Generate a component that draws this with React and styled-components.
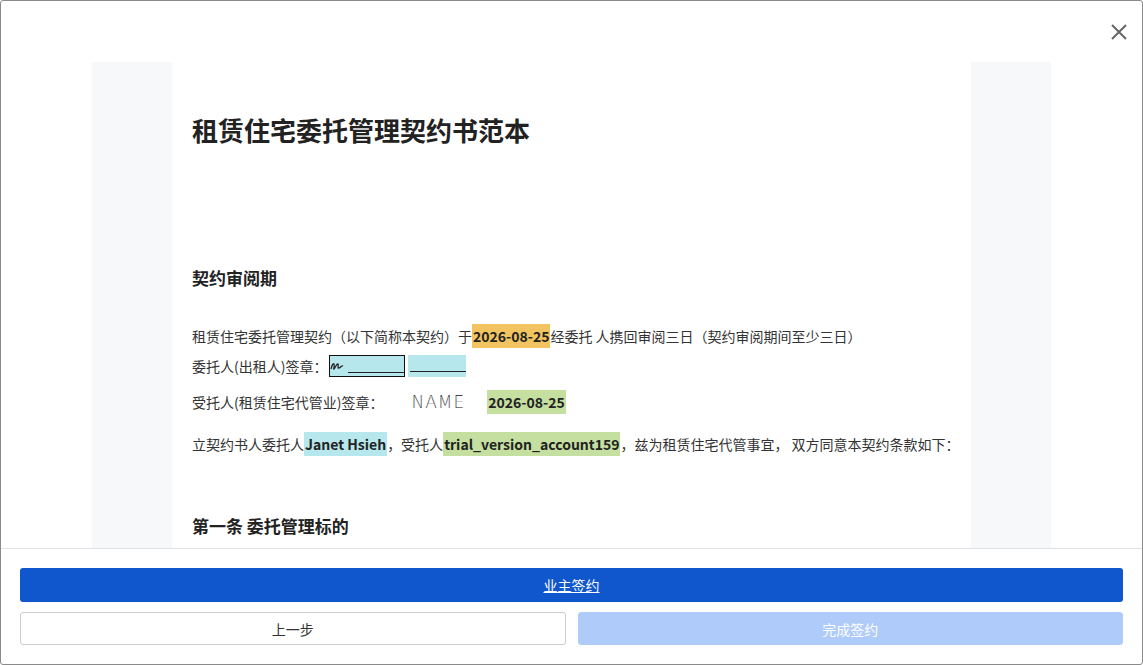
import React from "react";
import styled, { createGlobalStyle } from "styled-components";

const G = createGlobalStyle`
  html,body{margin:0;padding:0;background:#fff;}
  body{font-family:"Noto Sans CJK SC","Noto Sans",sans-serif;color:#333;}
`;
const Modal = styled.div`
  width:1143px;height:665px;box-sizing:border-box;border:1px solid #8a8a8a;border-radius:3px;
  display:flex;flex-direction:column;overflow:hidden;position:relative;background:#fff;
`;
const Close = styled.button`
  position:absolute;right:12px;top:20px;border:0;background:none;padding:0;width:22px;height:22px;cursor:pointer;
`;
const Scroll = styled.div`
  height:547px;flex:none;overflow:hidden;padding:61px 91px 0;box-sizing:border-box;
`;
const Gray = styled.div`background:#f7f8fa;padding:0 80px;height:100%;`;
const Page = styled.div`background:#fff;height:100%;padding:50px 20px 0;box-sizing:border-box;`;
const Title = styled.h1`margin:0 0 118px;font-size:26px;font-weight:700;color:#222;line-height:36px;`;
const H2 = styled.h2`margin:0 0 34px;font-size:17px;font-weight:700;color:#222;line-height:24px;`;
const P = styled.p`margin:0 0 ${p=>p.$mb||14}px;font-size:14px;line-height:24px;color:#333;white-space:nowrap;display:flex;align-items:center;`;
const Hl = styled.span`background:${p=>p.$c};font-weight:700;color:#222;padding:0 1px;margin-left:${p=>p.$ml||0}px;`;
const SigBox = styled.span`display:inline-flex;align-items:center;background:#b6e7ed;border:1.5px solid #111;height:20px;width:74px;margin:0 3px 0 2px;font-size:13px;`;
const Blank = styled.span`background:#b6e7ed;height:22px;width:58px;display:inline-flex;align-items:flex-end;`;
const Name = styled.span`font-family:"DejaVu Sans",sans-serif;font-weight:200;font-size:17px;letter-spacing:1px;margin-left:28px;color:#111;-webkit-text-stroke:0.2px #fff;`;
const Footer = styled.div`border-top:1px solid #dfe1e6;padding:19px 19px 0;display:flex;flex-direction:column;gap:10px;`;
const Primary = styled.button`
  height:34px;border:0;border-radius:3px;background:#1056cc;color:#fff;font-size:14px;text-decoration:underline;
  font-family:inherit;
`;
const Row = styled.div`display:flex;gap:12px;`;
const Btn = styled.button`
  flex:1;height:33px;border-radius:3px;font-size:14px;font-family:inherit;
  border:1px solid ${p=>p.$disabled?"#aecbfa":"#ccc"};
  background:${p=>p.$disabled?"#aecbfa":"#fff"};color:${p=>p.$disabled?"#fff":"#333"};
`;

export default function App(){
  return <><G/><Modal>
    <Close><svg width="22" height="22" viewBox="0 0 22 22"><path d="M4 4L18 18M18 4L4 18" stroke="#666" strokeWidth="2"/></svg></Close>
    <Scroll><Gray><Page>
      <Title>租赁住宅委托管理契约书范本</Title>
      <H2>契约审阅期</H2>
      <P $mb={6}>租赁住宅委托管理契约（以下简称本契约）于<Hl $c="#f2c45f">2026-08-25</Hl>经委托 人携回审阅三日（契约审阅期间至少三日）</P>
      <P $mb={12}>委托人(出租人)签章：<SigBox><svg width="18" height="12" viewBox="0 0 18 12"><path d="M1 9C2 5 3 3 4 4S3 10 4 9 7 3 8 4 7 9 9 8 12 5 13 6" stroke="#222" strokeWidth="1.3" fill="none"/></svg><u style={{flex:1,borderBottom:"1px solid #222",height:12}}></u></SigBox><Blank><u style={{width:"100%",borderBottom:"1px solid #222",marginBottom:5,marginLeft:2}}></u></Blank></P>
      <P $mb={18}>受托人(租赁住宅代管业)签章：<Name>NAME</Name><Hl $c="#c4df9f" $ml={22}>2026-08-25</Hl></P>
      <P $mb={58}>立契约书人委托人<Hl $c="#b6e7ed">Janet Hsieh</Hl>，受托人<Hl $c="#c4df9f">trial_version_account159</Hl>，兹为租赁住宅代管事宜， 双方同意本契约条款如下：</P>
      <H2>第一条 委托管理标的</H2>
    </Page></Gray></Scroll>
    <Footer>
      <Primary>业主签约</Primary>
      <Row><Btn>上一步</Btn><Btn $disabled>完成签约</Btn></Row>
    </Footer>
  </Modal></>;
}
